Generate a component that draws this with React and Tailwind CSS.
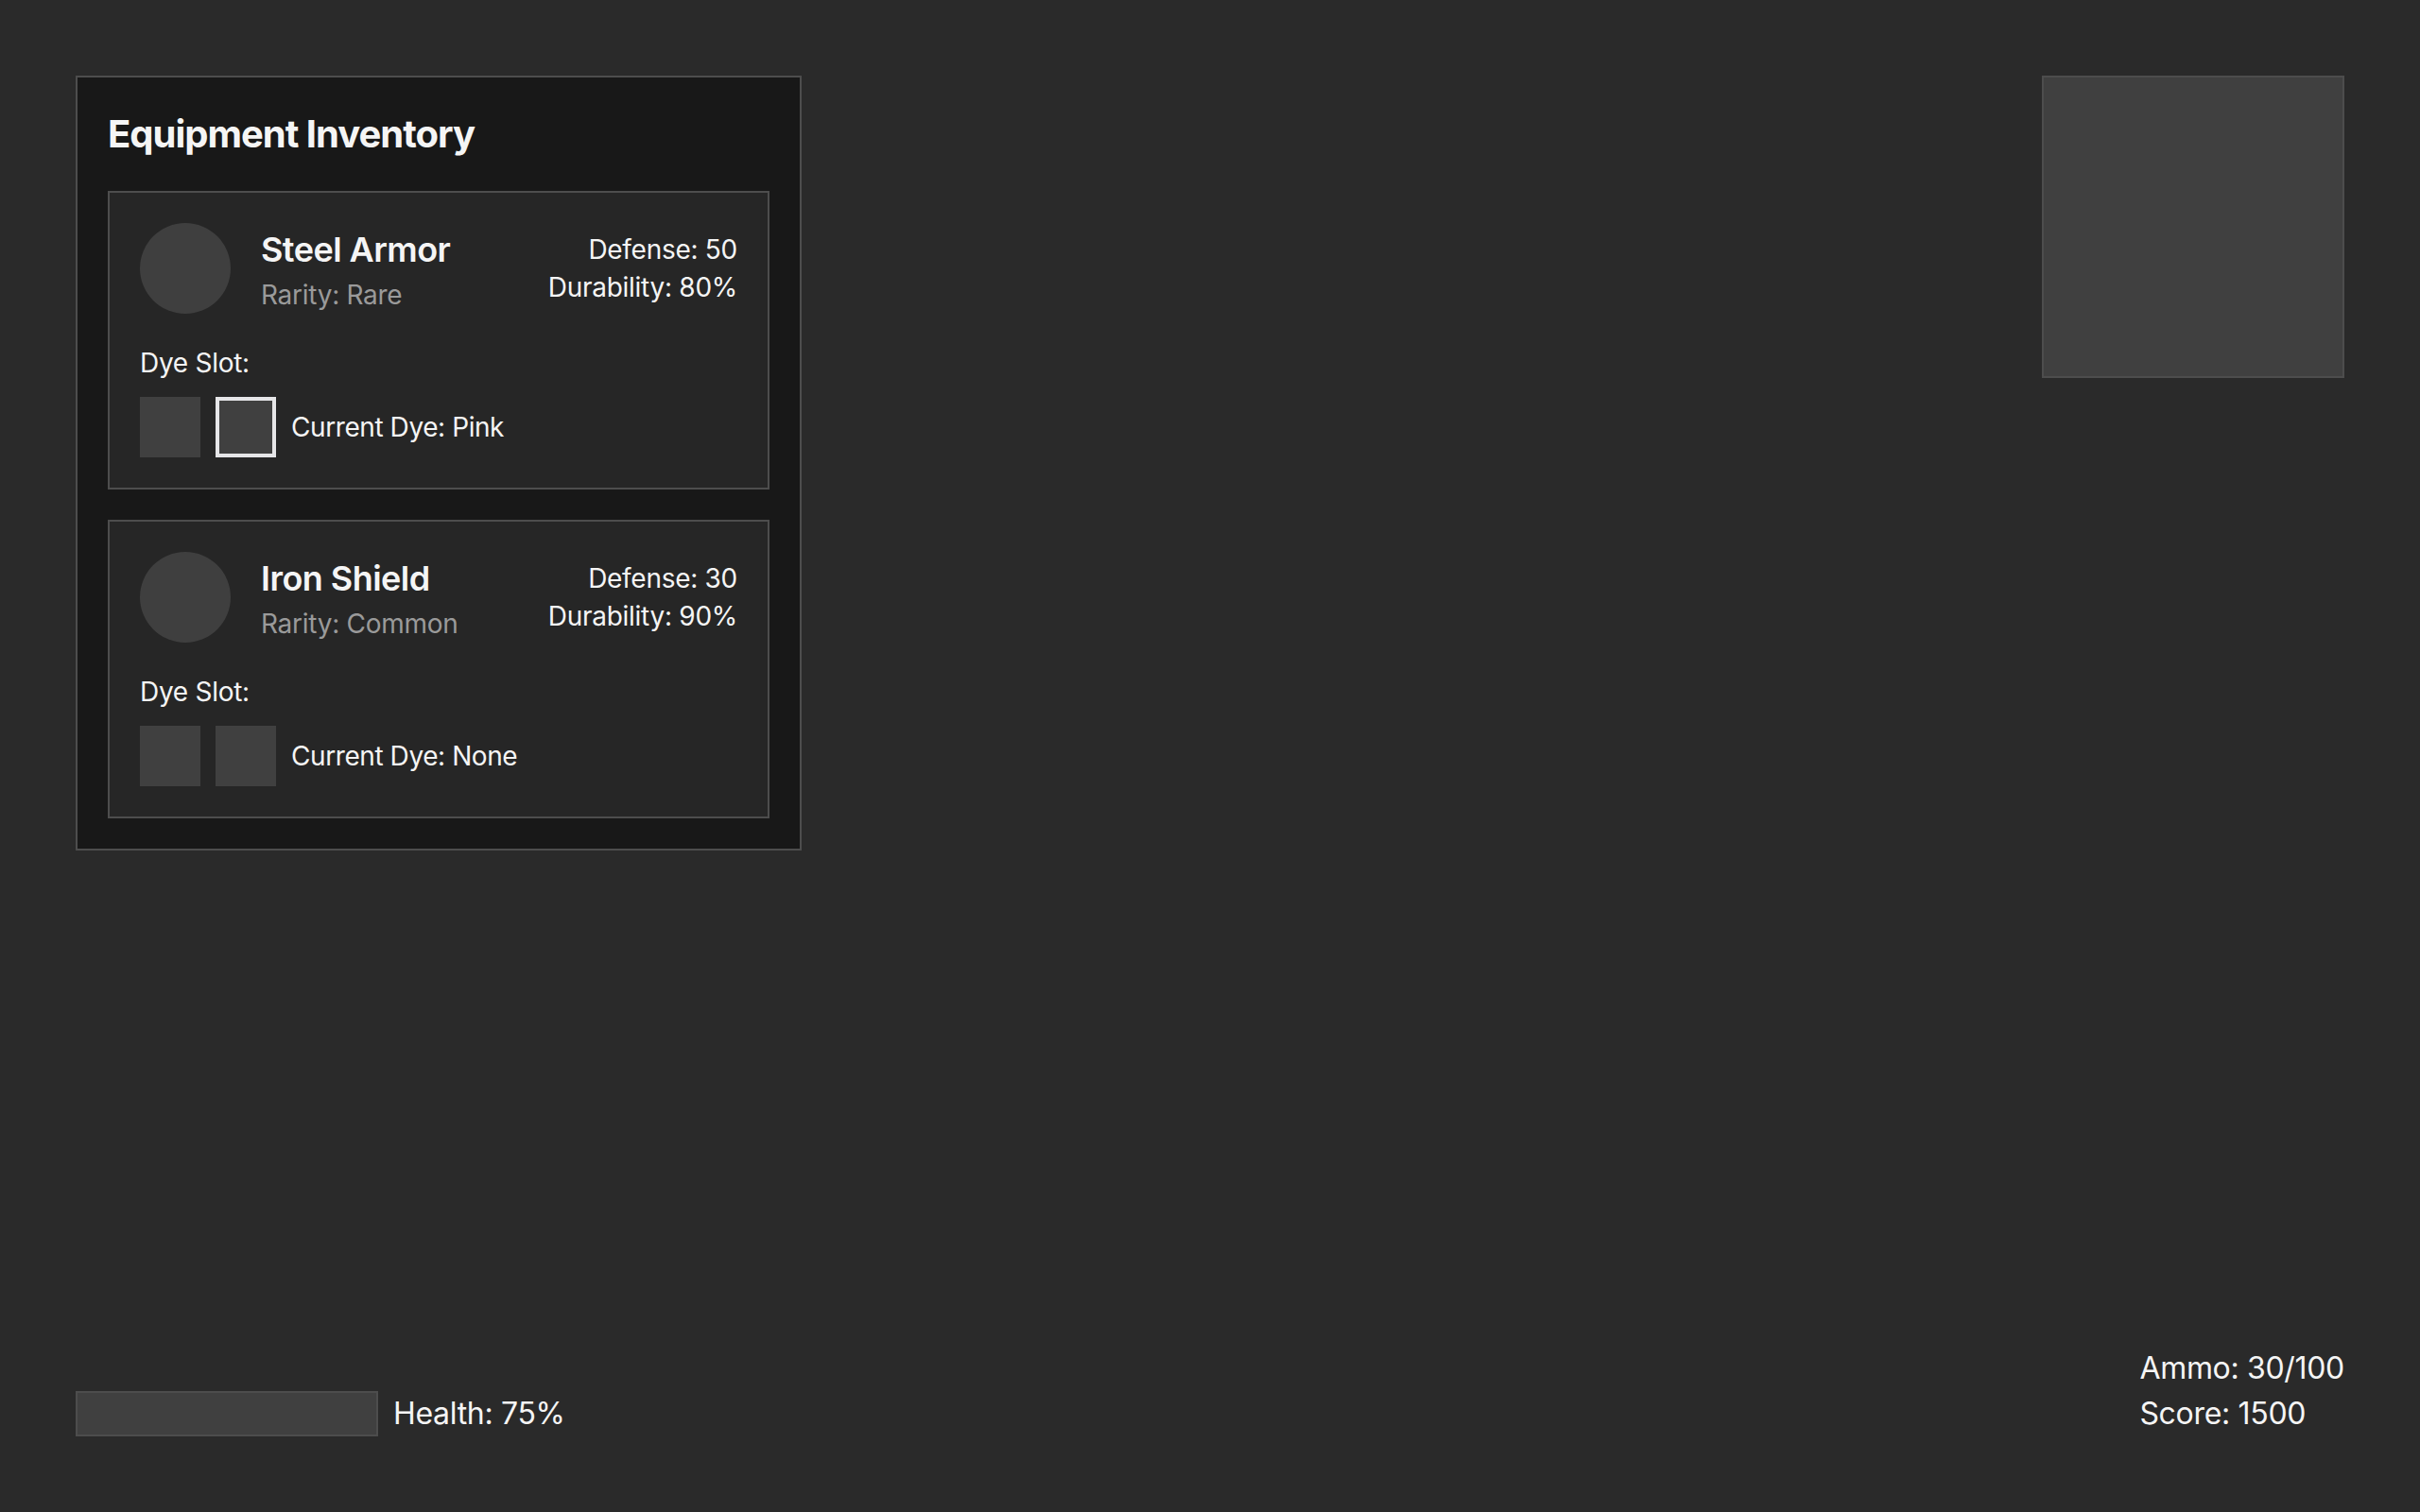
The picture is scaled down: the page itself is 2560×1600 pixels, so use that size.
import React from "react";

const items = [
  { name: "Steel Armor", rarity: "Rare", defense: 50, durability: 80, dye: "Pink", selected: 1 },
  { name: "Iron Shield", rarity: "Common", defense: 30, durability: 90, dye: "None", selected: -1 },
];

function ItemCard({ item }) {
  return (
    <div className="border-2 border-[#4d4d4d] bg-[#262626] p-[32px]">
      <div className="flex items-center justify-between">
        <div className="flex items-center gap-[32px]">
          <div className="h-[96px] w-[96px] rounded-full bg-[#3f3f3f]" />
          <div className="flex flex-col">
            <span className="text-[36px] font-semibold leading-[56px] tracking-[-0.015em] text-[#f5f5f5]">{item.name}</span>
            <span className="text-[28px] leading-[40px] tracking-[-0.01em] text-[#9a9a9a]">Rarity: {item.rarity}</span>
          </div>
        </div>
        <div className="flex flex-col items-end text-[28px] leading-[40px] tracking-[-0.01em] text-[#f5f5f5]">
          <span>Defense: {item.defense}</span>
          <span>Durability: {item.durability}%</span>
        </div>
      </div>
      <div className="mt-[32px] text-[28px] leading-[40px] tracking-[-0.01em] text-[#f5f5f5]">Dye Slot:</div>
      <div className="mt-[16px] flex items-center gap-[16px]">
        {[0, 1].map((i) => (
          <div
            key={i}
            className={
              i === item.selected
                ? "h-[64px] w-[64px] border-4 border-[#e6e6e8] bg-[#404040]"
                : "h-[64px] w-[64px] bg-[#404040]"
            }
          />
        ))}
        <span className="text-[28px] leading-[40px] tracking-[-0.015em] text-[#f5f5f5]">Current Dye: {item.dye}</span>
      </div>
    </div>
  );
}

export default function App() {
  return (
    <div
      className="flex h-screen w-full flex-col justify-between bg-[#2a2a2a] p-[80px] text-[#f5f5f5]"
      style={{ fontFamily: "Inter, 'Noto Sans', sans-serif" }}
    >
      <div className="flex items-start justify-between">
        <div className="w-[768px] border-2 border-[#4d4d4d] bg-[#181818] p-[32px]">
          <h1 className="mb-[32px] text-[40px] font-bold leading-[56px] tracking-[-0.025em] text-[#f5f5f5]">Equipment Inventory</h1>
          <div className="flex flex-col gap-[32px]">
            {items.map((it) => (
              <ItemCard key={it.name} item={it} />
            ))}
          </div>
        </div>
        <div className="h-[320px] w-[320px] border-2 border-[#4d4d4d] bg-[#404040]" />
      </div>
      <div className="flex items-end justify-between">
        <div className="flex items-center gap-[16px]">
          <div className="h-[48px] w-[320px] border-2 border-[#4d4d4d] bg-[#404040]" />
          <span className="text-[32px] leading-[48px] tracking-[-0.01em]">Health: 75%</span>
        </div>
        <div className="flex flex-col text-[32px] leading-[48px] tracking-[-0.01em]">
          <span>Ammo: 30/100</span>
          <span>Score: 1500</span>
        </div>
      </div>
    </div>
  );
}
